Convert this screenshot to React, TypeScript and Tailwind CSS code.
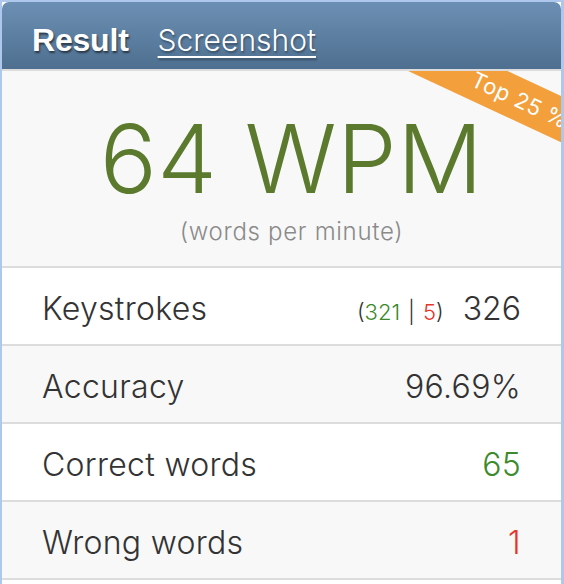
import React from "react";

type Row = {
  label: string;
  value: React.ReactNode;
  shaded: boolean;
};

const sans = "font-['Inter','Noto_Sans',sans-serif]";

function Ribbon() {
  return (
    <div className="pointer-events-none absolute left-[368px] top-[8px] flex h-[42px] w-[300px] rotate-[25deg] items-center justify-center bg-[#f29f3c]">
      <span className={`${sans} text-[22px] font-normal tracking-[0.5px] text-white`}>Top 25 %</span>
    </div>
  );
}

export default function App() {
  const rows: Row[] = [
    {
      label: "Keystrokes",
      shaded: false,
      value: (
        <span className="flex items-baseline">
          <span className="mr-[19px] text-[22px] tracking-normal text-[#333]">
            (<span className="text-[#3b8a2a]">321</span>
            <span className="mx-[8px] text-[#333]">|</span>
            <span className="text-[#e5352a]">5</span>)
          </span>
          <span className="tracking-normal text-[#333]">326</span>
        </span>
      ),
    },
    { label: "Accuracy", shaded: true, value: <span className="text-[#333]">96.69%</span> },
    { label: "Correct words", shaded: false, value: <span className="text-[#3d8a2c]">65</span> },
    { label: "Wrong words", shaded: true, value: <span className="text-[#e5352a]">1</span> },
  ];

  return (
    <div className="flex min-h-[584px] w-[564px] flex-col bg-[#adc8ec] pl-[2px] pr-[3px] pt-[2px]">
      <div className="flex flex-1 flex-col bg-white">
        {/* title bar */}
        <div className="flex h-[67px] items-center gap-[29px] rounded-t-[7px] bg-gradient-to-b from-[#6c90b4] to-[#4e6f8f] pl-[30px] pt-[8px]">
          <span className="font-['Liberation_Sans','Arial',sans-serif] text-[32px] font-bold leading-none tracking-[-0.2px] text-white [text-shadow:1px_2px_2px_rgba(0,0,0,0.55)]">
            Result
          </span>
          <span
            className={`${sans} text-[30px] font-light leading-none text-white underline decoration-[1.5px] underline-offset-[5px] [text-shadow:1px_2px_2px_rgba(0,0,0,0.35)]`}
          >
            Screenshot
          </span>
        </div>

        {/* headline speed */}
        <div className="relative flex h-[199px] flex-col items-center overflow-hidden border-t-2 border-b-2 border-[#dcdcdc] bg-[#f8f8f8] pl-[20px]">
          <Ribbon />
          <div className={`${sans} mt-[38px] text-[95px] font-light leading-[100px] tracking-[0.5px] text-[#5b7a2d]`}>
            64 WPM
          </div>
          <div className={`${sans} mt-[11px] text-[24px] font-light leading-none tracking-[0.7px] text-[#8a8a8a]`}>
            (words per minute)
          </div>
        </div>

        {/* stats */}
        {rows.map((r) => (
          <div
            key={r.label}
            className={`${sans} flex h-[78px] items-center justify-between border-b-2 border-[#dcdcdc] pl-[40px] pr-[40px] pt-[6px] text-[32px] font-light tracking-[0.3px] ${
              r.shaded ? "bg-[#f8f8f8]" : "bg-white"
            }`}
          >
            <span className="text-[#333]">{r.label}</span>
            {r.value}
          </div>
        ))}
      </div>
    </div>
  );
}
